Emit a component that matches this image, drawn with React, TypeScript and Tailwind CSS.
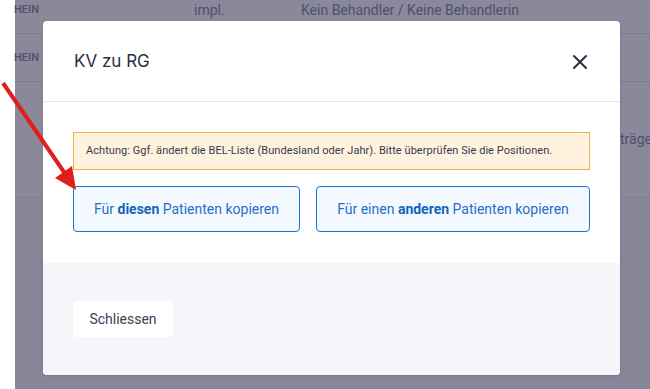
import React from "react";

export default function App() {
  const roboto = { fontFamily: "Roboto, 'Liberation Sans', sans-serif" };
  return (
    <div
      className="relative w-[650px] h-[389px] overflow-hidden flex bg-white"
      style={roboto}
    >
      <div className="w-[15px] shrink-0 bg-white" />
      <div className="flex-1 flex flex-col bg-[#8a8899] text-[#4d5170]">
        <div className="h-[34px] shrink-0 flex items-start border-b border-[#7d7b90]">
          <div className="h-[20px] flex items-center w-[180px] text-[11px] font-medium -ml-px">HEIN</div>
          <div className="h-[20px] flex items-center w-[107px] text-[14px]">impl.</div>
          <div className="h-[20px] flex items-center text-[14px]">Kein Behandler / Keine Behandlerin</div>
        </div>
        <div className="h-[48px] shrink-0 flex items-center border-b border-[#7d7b90]">
          <div className="w-[180px] text-[11px] font-medium -ml-px pt-[2px]">HEIN</div>
        </div>
        <div className="h-[116px] shrink-0 flex items-center justify-end border-b border-[#807e92]">
          <div className="text-[14px] w-[30px] whitespace-nowrap">träge</div>
        </div>
        <div className="flex-1 bg-[#878598]" />
      </div>

      <div className="absolute left-[43px] top-[21px] w-[577px] h-[354px] rounded-[4px] bg-white overflow-hidden flex flex-col shadow-sm">
        <div className="h-[81px] shrink-0 flex items-center justify-between pl-[31px] pr-[32px] border-b border-[#e4e4ec]">
          <div
            className="text-[17px] text-[#2b2e42] pt-[2px]"
            style={{ fontFamily: "Inter, 'Open Sans', sans-serif" }}
          >
            KV zu RG
          </div>
          <svg width="16" height="16" viewBox="0 0 16 16" className="mt-[2px]">
            <path d="M2 2 L14 14 M14 2 L2 14" stroke="#2d3142" strokeWidth="2" strokeLinecap="round" />
          </svg>
        </div>
        <div className="flex flex-col px-[30px] pt-[30px] pb-[31px] gap-[16px]">
          <div className="h-[38px] flex items-center px-[12px] bg-[#fff2df] border border-[#f9b13d] text-[11px] tracking-[0.05px] text-[#383b4e]">
            Achtung: Ggf. ändert die BEL-Liste (Bundesland oder Jahr). Bitte überprüfen Sie die Positionen.
          </div>
          <div className="flex gap-[16px]">
            <button className="h-[46px] w-[227px] rounded-[4px] border border-[#1c74d2] bg-[#f4f9ff] text-[14px] text-[#1f70c9]">
              Für <span className="font-bold text-[#1563bb]">diesen</span> Patienten kopieren
            </button>
            <button className="h-[46px] w-[274px] rounded-[4px] border border-[#1c74d2] bg-[#f4f9ff] text-[14px] text-[#1f70c9]">
              Für einen <span className="font-bold text-[#1563bb]">anderen</span> Patienten kopieren
            </button>
          </div>
        </div>
        <div className="flex-1 bg-[#f5f6fa] pl-[30px] pt-[38px]">
          <button className="h-[36px] w-[100px] rounded-[4px] bg-white text-[14px] text-[#3d4054]">
            Schliessen
          </button>
        </div>
      </div>

      <svg className="absolute left-0 top-0 pointer-events-none" width="650" height="389" viewBox="0 0 650 389">
        <line x1="3" y1="83" x2="66" y2="175" stroke="#e01e1e" strokeWidth="4" />
        <polygon points="55,178 72,166 76,190" fill="#e01e1e" />
      </svg>
    </div>
  );
}
